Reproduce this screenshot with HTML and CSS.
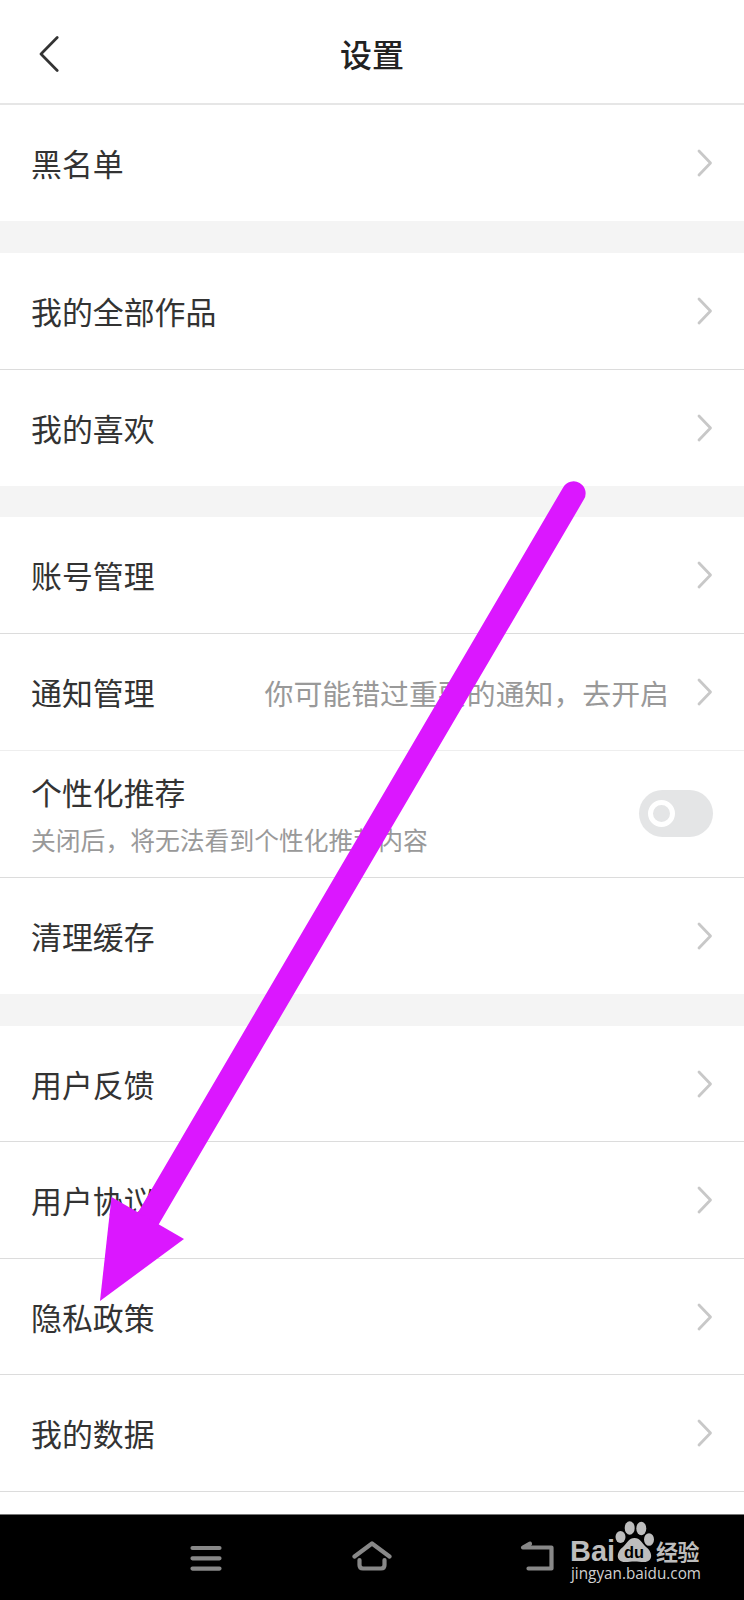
FILE: index.html
```html
<!DOCTYPE html>
<html lang="zh-CN">
<head>
    <meta charset="UTF-8">
    <title>设置</title>
    <link rel="stylesheet" href="styles.css">
</head>
<body>
    <svg class="defs">
        <symbol id="chevron" viewBox="0 0 16 28">
            <path d="M2 2 L13.5 14 L2 26"/>
        </symbol>
    </svg>

    <div class="page">
        <header class="header">
            <svg class="back" viewBox="0 0 20 36"><path d="M18.2 1.5 L2 18 L18.2 34.5"/></svg>
            <h1>设置</h1>
        </header>

        <div class="section">
            <div class="row"><span>黑名单</span><svg class="chevron"><use href="#chevron"/></svg></div>
        </div>

        <div class="section">
            <div class="row"><span>我的全部作品</span><svg class="chevron"><use href="#chevron"/></svg></div>
            <div class="row"><span>我的喜欢</span><svg class="chevron"><use href="#chevron"/></svg></div>
        </div>

        <div class="section">
            <div class="row"><span>账号管理</span><svg class="chevron"><use href="#chevron"/></svg></div>
            <div class="row light">
                <span>通知管理</span>
                <span class="hint">你可能错过重要的通知，去开启</span>
                <svg class="chevron"><use href="#chevron"/></svg>
            </div>
            <div class="row tall">
                <div>
                    <div class="name">个性化推荐</div>
                    <div class="desc">关闭后，将无法看到个性化推荐内容</div>
                </div>
                <div class="switch"><div class="knob"></div></div>
            </div>
            <div class="row"><span>清理缓存</span><svg class="chevron"><use href="#chevron"/></svg></div>
        </div>

        <div class="section last">
            <div class="row short"><span>用户反馈</span><svg class="chevron"><use href="#chevron"/></svg></div>
            <div class="row"><span>用户协议</span><svg class="chevron"><use href="#chevron"/></svg></div>
            <div class="row short"><span>隐私政策</span><svg class="chevron"><use href="#chevron"/></svg></div>
            <div class="row"><span>我的数据</span><svg class="chevron"><use href="#chevron"/></svg></div>
            <div class="rest"></div>
        </div>

        <footer class="navbar">
            <svg class="menu" viewBox="0 0 32 26">
                <path d="M2.5 3 H29.5 M2.5 13.3 H29.5 M2.5 23.6 H29.5"/>
            </svg>
            <svg class="home" viewBox="0 0 40 31">
                <path d="M2.5 16.5 L20 3.5 L37.5 16.5 M7.5 20 V25 Q7.5 28.5 11 28.5 H29 Q32.5 28.5 32.5 25 V20"/>
            </svg>
            <svg class="return" viewBox="0 0 36 32">
                <path d="M11 3.7 L4 7.5 H32.5 V28.5 H9.5"/>
            </svg>
            <svg class="logo" viewBox="0 0 140 70">
                <text class="latin" x="1" y="42" textLength="45" lengthAdjust="spacingAndGlyphs">Bai</text>
                <ellipse cx="51.5" cy="18" rx="5" ry="6"/>
                <ellipse cx="60.7" cy="9" rx="5" ry="6.7"/>
                <ellipse cx="72.3" cy="9.5" rx="5" ry="6.7"/>
                <ellipse cx="80" cy="20.5" rx="5" ry="6.3"/>
                <path d="M65.500 19 C71 19 73 24 77 28 C84 33 84.500 43 75 43 C71 43 69 42.500 65.500 42.500 C62 42.500 60 43 56 43 C46.500 43 47 33 54 28 C58 24 60 19 65.500 19 Z"/>
                <text class="du" x="55" y="38.500" textLength="20" lengthAdjust="spacingAndGlyphs">du</text>
                <text class="cn" x="87" y="41" textLength="43.500">经验</text>
                <text class="url" x="2" y="60" textLength="130" lengthAdjust="spacingAndGlyphs">jingyan.baidu.com</text>
            </svg>
        </footer>

        <!-- arrow pointing at the privacy policy row -->
        <svg class="arrow" viewBox="0 0 744 1600">
            <path class="shaft" d="M573.6 493.3 L148 1219"/>
            <path class="head" d="M100 1301 L111.5 1197 L184 1239 Z"/>
        </svg>
    </div>
</body>
</html>
```
FILE: styles.css
```css
body {
    margin: 0;
    background-color: #fff;
    color: #333;
    font-family: "Noto Sans CJK SC", sans-serif;
}

.defs {
    display: none;
}

.page {
    position: relative;
    width: 744px;
    height: 1600px;
    overflow: hidden;
    background-color: #f4f4f4;
    display: flex;
    flex-direction: column;
}

svg path {
    stroke-linecap: round;
    stroke-linejoin: round;
}

.header {
    height: 103px;
    border-bottom: 2px solid #e6e6e6;
    background-color: #fff;
    display: grid;
    grid-template-columns: 60px 1fr 60px;
    align-items: center;
}

.header h1 {
    margin: 3px 0 0;
    font-size: 32px;
    line-height: 40px;
    font-weight: 500;
    text-align: center;
    color: #222;
}

.back {
    width: 20px;
    height: 36px;
    margin-left: 39px;
    margin-top: 4px;
    fill: none;
    stroke: #333;
    stroke-width: 2.7;
}

.section {
    background-color: #fff;
    margin-bottom: 31.6px;
}

.section.last {
    margin-bottom: 0;
}

.row {
    display: flex;
    align-items: center;
    justify-content: space-between;
    box-sizing: border-box;
    height: 117px;
    padding: 0 31px;
    border-bottom: 1px solid #dcdcdc;
    font-size: 30.9px;
    line-height: 40px;
}

.row:last-child {
    height: 116px;
    border-bottom: none;
}

.row.light {
    border-color: #eee;
}

.row.short {
    height: 116px;
    padding-top: 1px;
}

.row.tall {
    height: 127px;
}

.chevron {
    width: 16px;
    height: 28px;
    flex: none;
    fill: none;
    stroke: #c8c8c8;
    stroke-width: 2.8;
}

.hint {
    margin-left: auto;
    margin-right: 28px;
    font-size: 28.9px;
    color: #999;
}

.name {
    line-height: 40px;
}

.desc {
    margin-top: 9px;
    font-size: 24.8px;
    line-height: 36px;
    color: #999;
}

.switch {
    display: flex;
    align-items: center;
    box-sizing: border-box;
    width: 74px;
    height: 47px;
    margin-top: -2px;
    padding-left: 9px;
    border-radius: 24px;
    background-color: #e4e5e6;
}

.knob {
    box-sizing: border-box;
    width: 27px;
    height: 27px;
    border: 5px solid #fff;
    border-radius: 50%;
}

.rest {
    height: 22px;
}

.navbar {
    flex: 1;
    display: flex;
    align-items: flex-start;
    box-sizing: border-box;
    padding-left: 190px;
    border-top: 1px solid #777;
    background-color: #000;
}

.navbar svg {
    flex: none;
    fill: none;
    stroke: #888;
    stroke-width: 4.2;
}

.navbar .menu {
    width: 32px;
    height: 26px;
    margin-top: 30px;
}

.navbar .home {
    width: 40px;
    height: 31px;
    margin: 25px 0 0 130px;
}

.navbar .return {
    width: 36px;
    height: 32px;
    margin: 25px 0 0 127px;
}

.navbar .logo {
    width: 140px;
    height: 70px;
    margin: 4px 0 0 14px;
    fill: #bdbdbd;
    stroke: none;
}

.latin {
    font: bold 29px "Liberation Sans", sans-serif;
}

.du {
    font: bold 17px "Liberation Sans", sans-serif;
    fill: #000;
}

.cn {
    font-size: 22px;
    font-weight: bold;
}

.url {
    font: 17px "Open Sans", sans-serif;
    fill: #d0d0d0;
}

.arrow {
    position: absolute;
    top: 0;
    left: 0;
    width: 744px;
    height: 1600px;
    pointer-events: none;
}

.shaft {
    stroke: #db17ff;
    stroke-width: 24;
}

.head {
    fill: #db17ff;
}
```
